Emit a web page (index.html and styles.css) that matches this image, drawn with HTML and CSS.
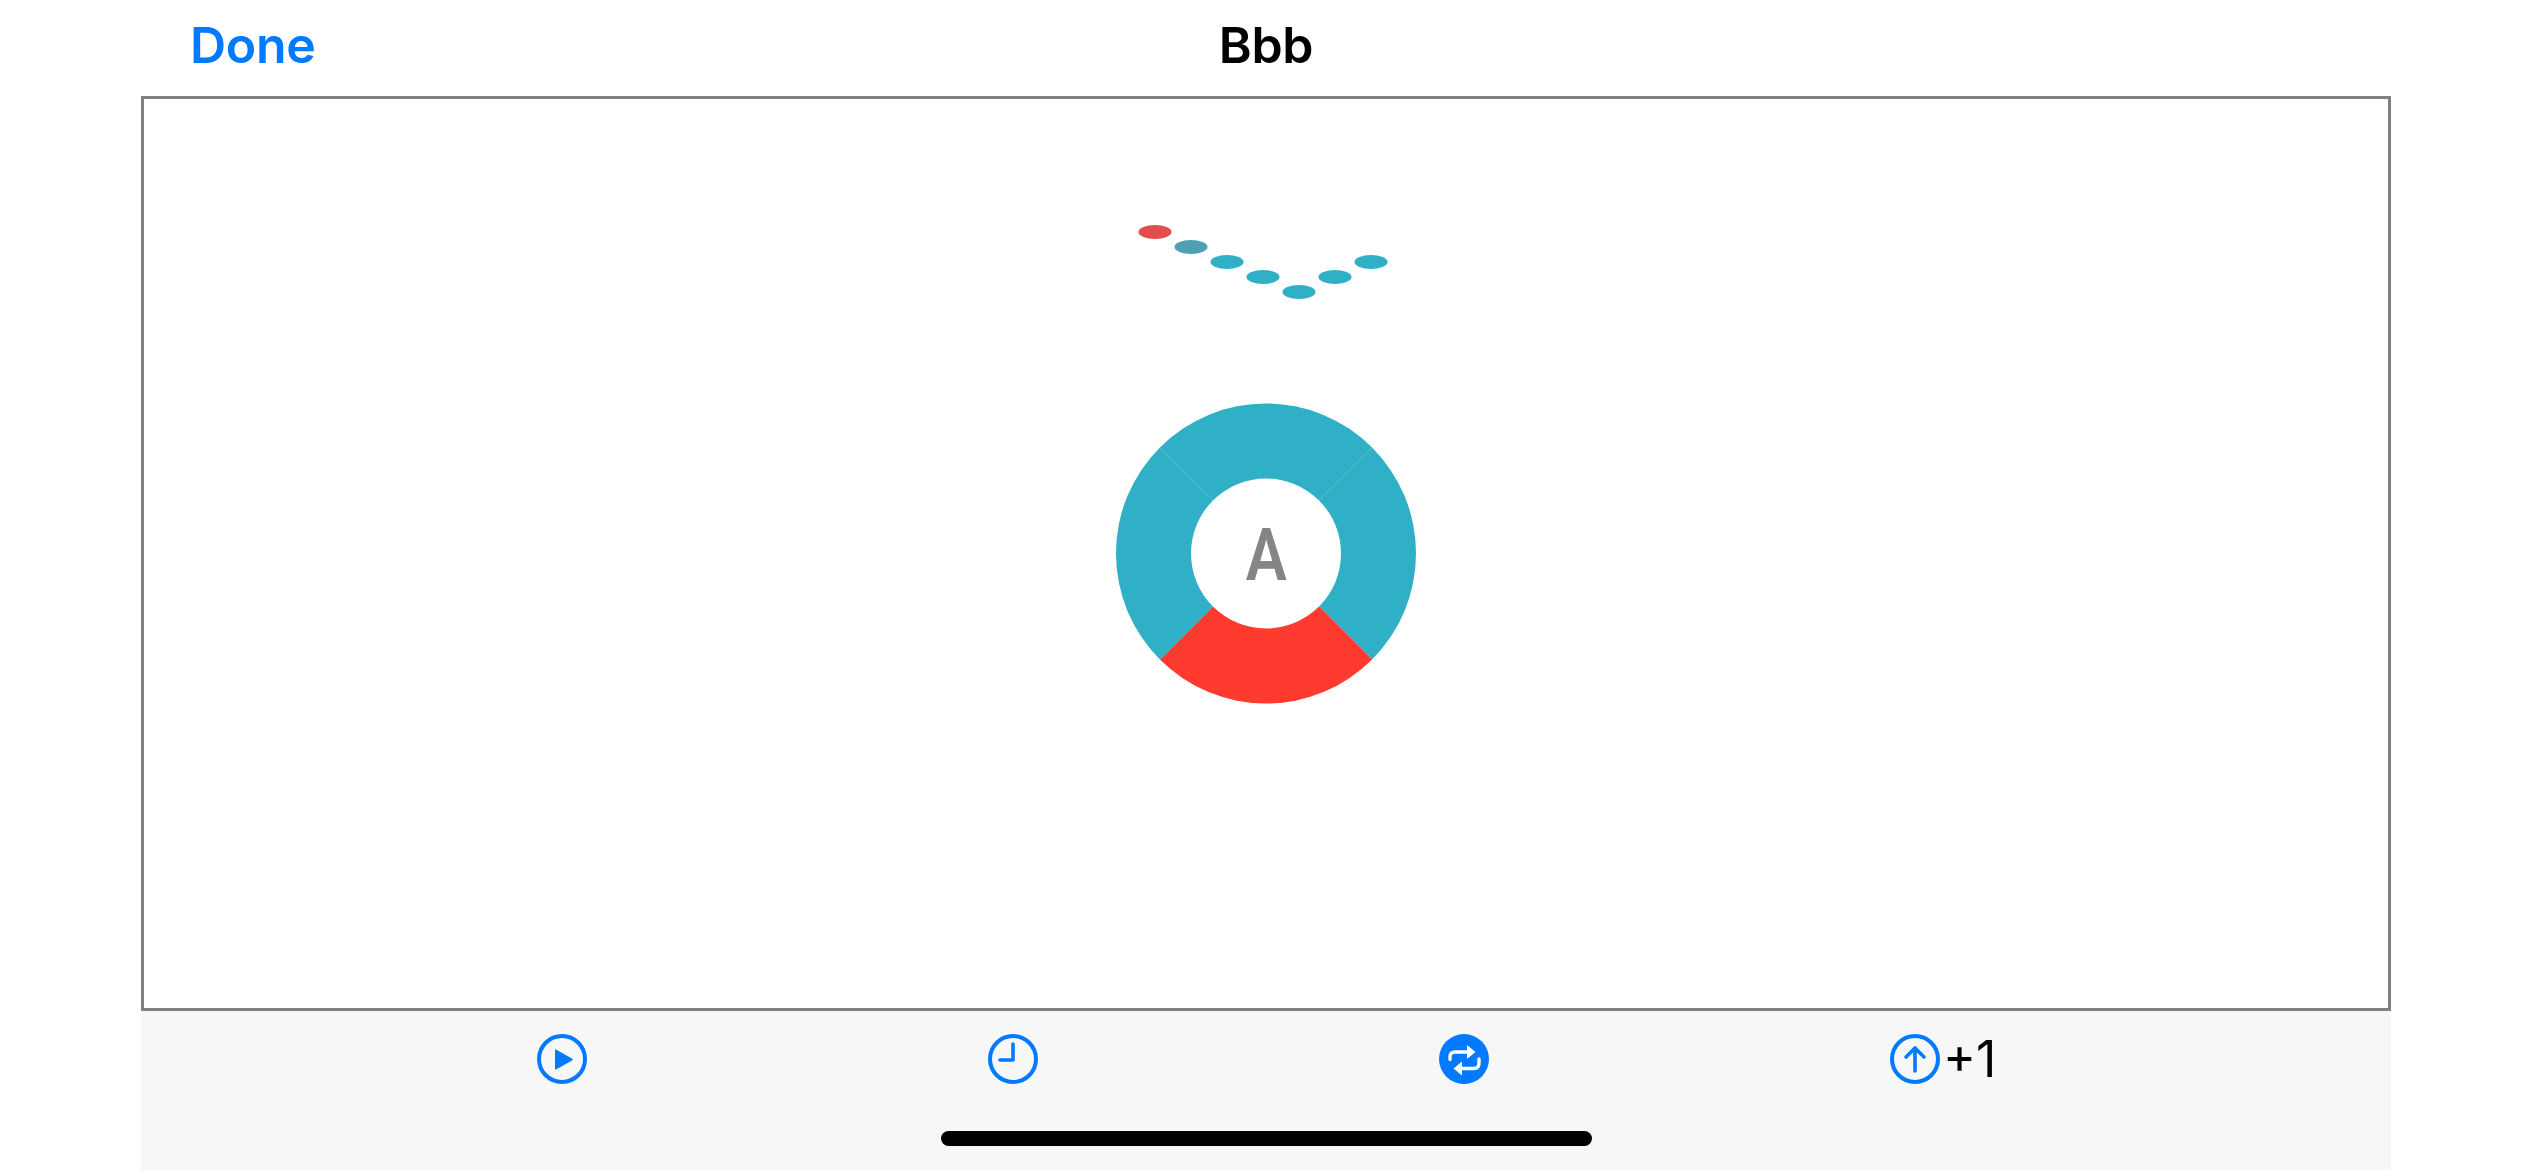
FILE: index.html
```html
<!DOCTYPE html>
<html>
  <head>
    <title>Bbb</title>
    <meta http-equiv="Content-Type" content="text/html; charset=UTF-8"/>
    <link rel="stylesheet" href="styles.css">
  </head>
  <body>
    <div class="page">
      <header class="navbar">
        <span class="done">Done</span>
        <span class="title">Bbb</span>
      </header>

      <main class="stage">
        <svg class="canvas" viewBox="144 99 2244 909" xmlns="http://www.w3.org/2000/svg">
          <!-- stick hits -->
          <ellipse class="dot-red" cx="1155" cy="232" rx="16.5" ry="7"/>
          <ellipse class="dot-fade" cx="1191" cy="247" rx="16.5" ry="7"/>
          <ellipse class="dot" cx="1227" cy="262" rx="16.5" ry="7"/>
          <ellipse class="dot" cx="1263" cy="277" rx="16.5" ry="7"/>
          <ellipse class="dot" cx="1299" cy="292" rx="16.5" ry="7"/>
          <ellipse class="dot" cx="1335" cy="277" rx="16.5" ry="7"/>
          <ellipse class="dot" cx="1371" cy="262" rx="16.5" ry="7"/>

          <!-- pad -->
          <path class="wedge" d="M1159.93 447.43A150 150 0 0 1 1372.07 447.43L1319.03 500.47A75 75 0 0 0 1212.97 500.47Z"/>
          <path class="wedge" d="M1372.07 447.43A150 150 0 0 1 1372.07 659.57L1319.03 606.53A75 75 0 0 0 1319.03 500.47Z"/>
          <path class="wedge-on" d="M1372.07 659.57A150 150 0 0 1 1159.93 659.57L1212.97 606.53A75 75 0 0 0 1319.03 606.53Z"/>
          <path class="wedge" d="M1159.93 659.57A150 150 0 0 1 1159.93 447.43L1212.97 500.47A75 75 0 0 0 1212.97 606.53Z"/>
          <text class="pad-label" x="1266.3" y="580" text-anchor="middle" textLength="41" lengthAdjust="spacingAndGlyphs">A</text>
        </svg>
      </main>

      <footer class="toolbar">
        <div class="tools">
          <svg class="tool" viewBox="0 0 50 50">
            <circle class="ring" cx="25" cy="25" r="23"/>
            <path class="fill-blue" d="M19 15.5L35 24.5Q36.5 25.5 35 26.5L19 35.5Q18 36 18 34.5V16.5Q18 15 19 15.5Z"/>
          </svg>
          <svg class="tool" viewBox="0 0 50 50">
            <circle class="ring" cx="25" cy="25" r="23"/>
            <path class="hand" d="M25 10V26H12"/>
          </svg>
          <svg class="tool" viewBox="0 0 50 50">
            <circle class="fill-blue" cx="25" cy="25" r="25"/>
            <path class="repeat" d="M11 25.5V23Q11 18 16 18H29"/>
            <path class="fill-white" d="M28 11L36.5 18L28 25Z"/>
            <path class="repeat" d="M40 25V29Q40 34.5 35 34.5H22"/>
            <path class="fill-white" d="M23 27.5L14.5 34.5L23 41.5Z"/>
          </svg>
          <div class="tool-count">
            <svg class="tool" viewBox="0 0 50 50">
              <circle class="ring" cx="25" cy="25" r="23"/>
              <path class="hand" d="M25 37V14M16 23L25 14L34 23"/>
            </svg>
            <span class="count">+1</span>
          </div>
        </div>
        <div class="home-bar"></div>
      </footer>
    </div>
  </body>
</html>
```

FILE: styles.css
```css
body {
  margin: 0;
  background-color: #fff;
  font-family: 'Inter', 'Liberation Sans', sans-serif;
}

.page {
  display: flex;
  flex-direction: column;
  height: 100vh;
  overflow: hidden;
}

.navbar {
  display: grid;
  grid-template-columns: 1fr auto 1fr;
  align-items: center;
  height: 96px;
  padding: 0 190px 6px;
  font-size: 50px;
  font-weight: 560;
  letter-spacing: -0.3px;
  box-sizing: border-box;
}

.done {
  color: #007aff;
}

.title {
  color: #000;
}

.stage {
  flex: 1;
  margin: 0 141px;
  border: 3px solid #808080;
  min-height: 0;
}

.canvas {
  display: block;
  width: 100%;
  height: 100%;
}

.dot { fill: #30b0c7; }
.dot-red { fill: #e34e4b; }
.dot-fade { fill: #4fa0b5; }
.wedge { fill: #30b0c7; }
.wedge-on { fill: #ff3b30; }

.pad-label {
  fill: #858585;
  font-family: 'Roboto', sans-serif;
  font-size: 72px;
  font-weight: 600;
}

.toolbar {
  display: flex;
  flex-direction: column;
  height: 159px;
  margin: 0 141px;
  background-color: #f7f7f7;
}

.tools {
  display: flex;
  align-items: flex-start;
  gap: 401px;
  padding-top: 23px;
  padding-left: 396px;
}

.tool {
  display: block;
  flex: none;
  width: 50px;
  height: 50px;
}

.tool-count {
  display: flex;
  align-items: center;
  gap: 3px;
}

.count {
  color: #000;
  font-size: 50px;
  line-height: 50px;
}

.ring {
  fill: none;
  stroke: #007aff;
  stroke-width: 4;
}

.hand {
  fill: none;
  stroke: #007aff;
  stroke-width: 3.6;
  stroke-linecap: round;
  stroke-linejoin: round;
}

.repeat {
  fill: none;
  stroke: #fff;
  stroke-width: 3.4;
  stroke-linecap: round;
}

.fill-blue { fill: #007aff; }
.fill-white { fill: #fff; }

.home-bar {
  width: 651px;
  height: 15px;
  margin: 47px auto 0;
  border-radius: 8px;
  background-color: #000;
}
```
